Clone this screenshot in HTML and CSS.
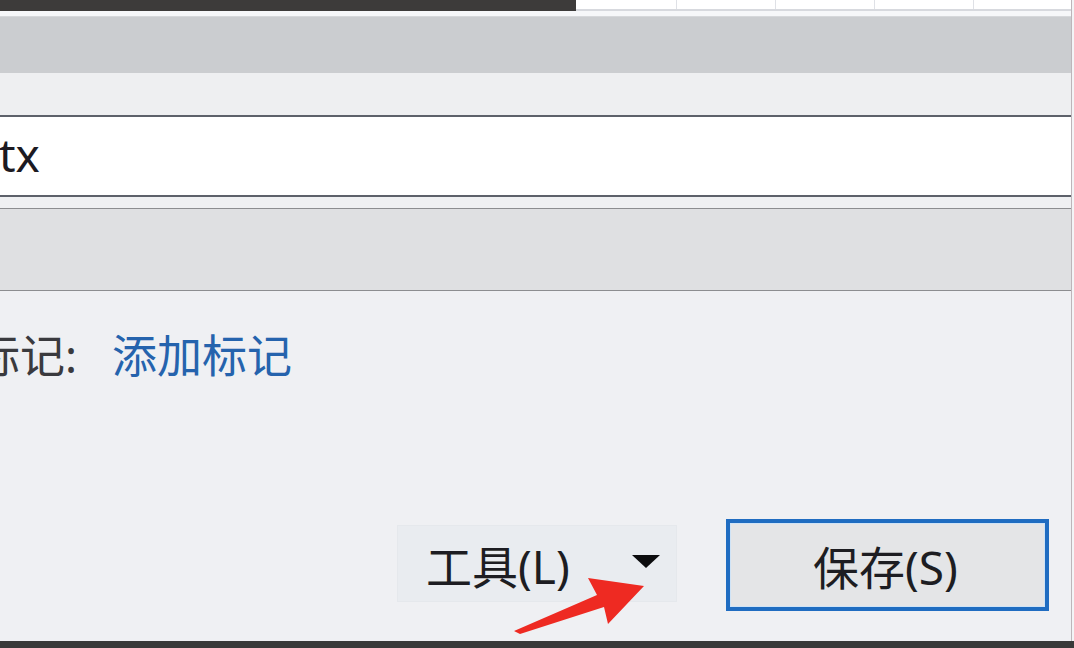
FILE: index.html
```html
<!DOCTYPE html>
<html lang="zh-CN">
<head>
<meta charset="utf-8">
<title>保存</title>
<link rel="stylesheet" href="styles.css">
</head>
<body>
<div class="page">
  <div class="window">
    <div class="topbar">
      <div class="topbar-dark"></div>
      <div class="topbar-cells">
        <div class="cell first"></div>
        <div class="cell"></div>
        <div class="cell"></div>
        <div class="cell"></div>
        <div class="cell last"></div>
      </div>
    </div>
    <div class="strip"></div>
    <div class="band-top"></div>
    <div class="area"></div>
    <div class="filename"><span class="filename-text">tx</span></div>
    <div class="gap"></div>
    <div class="band-type"></div>
    <div class="content">
      <div class="tag-row">
        <span class="tag-label">标记:</span>
        <span class="tag-link">添加标记</span>
      </div>
      <div class="button-row">
        <div class="tool-btn">
          <span class="tool-text">工具(L)</span>
          <span class="caret"></span>
        </div>
        <div class="save-btn"><span>保存(S)</span></div>
      </div>
    </div>
  </div>
  <div class="bottombar"></div>
  <svg class="arrow" width="1074" height="648" viewBox="0 0 1074 648">
    <polygon points="514,631 597,595 588,578 644,586 608,624 604,607 520,634" fill="#ee2a22"/>
  </svg>
</div>
</body>
</html>
```

FILE: styles.css
```css
* { box-sizing: border-box; }
html, body { margin: 0; padding: 0; }
body {
  width: 1074px;
  height: 648px;
  overflow: hidden;
  background: #f2f3f5;
  font-family: "Noto Sans", "Noto Sans CJK SC", sans-serif;
}
.page {
  position: relative;
  width: 1074px;
  height: 648px;
  display: flex;
  flex-direction: column;
  background: #f3f4f6;
}
.window {
  width: 1072px;
  height: 641px;
  border-right: 1px solid #bdb5ba;
  background: #eff0f2;
  display: flex;
  flex-direction: column;
}
.topbar {
  height: 11px;
  display: flex;
}
.topbar-dark {
  flex: 0 0 576px;
  background: #3d3b3a;
}
.topbar-cells {
  flex: 1 1 auto;
  display: flex;
  background: #ffffff;
  border-bottom: 2px solid #d7d9de;
}
.cell {
  flex: 0 0 99px;
  border-right: 1px solid #dfe1e6;
}
.cell.first { flex-basis: 101px; }
.cell.last { flex: 1 1 auto; border-right: none; }
.strip {
  height: 6px;
  background: #f6f7f9;
  border-bottom: 1px solid #d6d8db;
}
.band-top {
  height: 56px;
  background: #cbcdd0;
}
.area {
  height: 42px;
  background: #eeeff1;
}
.filename {
  height: 82px;
  background: #ffffff;
  border-top: 2px solid #5d616a;
  border-bottom: 2px solid #5d616a;
  display: flex;
  align-items: center;
}
.filename-text {
  font-size: 46px;
  line-height: 1;
  color: #1c1a22;
  margin-left: -1px;
  margin-top: -4px;
}
.gap {
  height: 11px;
  background: #eff0f2;
}
.band-type {
  height: 83px;
  background: #dfe0e2;
  border-top: 1px solid #8c8d90;
  border-bottom: 1px solid #8c8d90;
}
.content {
  flex: 1;
  display: flex;
  flex-direction: column;
  background: #eff0f3;
}
.tag-row {
  display: flex;
  align-items: center;
  margin-top: 41px;
  height: 46px;
  font-size: 45px;
  line-height: 1;
}
.tag-label {
  color: #3a3a3e;
  margin-left: -25px;
  width: 137px;
}
.tag-link {
  color: #2563ad;
}
.button-row {
  display: flex;
  align-items: center;
  margin-top: 141px;
  padding-left: 397px;
  gap: 49px;
}
.tool-btn {
  width: 280px;
  height: 77px;
  margin-top: -3px;
  background: #e9ecf0;
  border: 1px solid #e5e8ec;
  display: flex;
  align-items: center;
  padding-left: 28px;
}
.tool-text {
  font-size: 46px;
  line-height: 1;
  color: #1d1d22;
  width: 206px;
  margin-top: 4px;
}
.caret {
  width: 0;
  height: 0;
  border-left: 14px solid transparent;
  border-right: 14px solid transparent;
  border-top: 13px solid #0c0c0e;
  margin-top: -4px;
}
.save-btn {
  width: 323px;
  height: 92px;
  border: 4px solid #1f6cc1;
  box-shadow: inset 0 0 0 1px #cfe3f6;
  background: #e4e5e7;
  display: flex;
  align-items: center;
  justify-content: center;
  font-size: 46px;
  line-height: 1;
  color: #1d1d22;
}
.save-btn span { margin-top: 4px; margin-right: 4px; }
.bottombar {
  height: 7px;
  background: #393939;
}
.arrow {
  position: absolute;
  left: 0;
  top: 0;
  pointer-events: none;
}
```
